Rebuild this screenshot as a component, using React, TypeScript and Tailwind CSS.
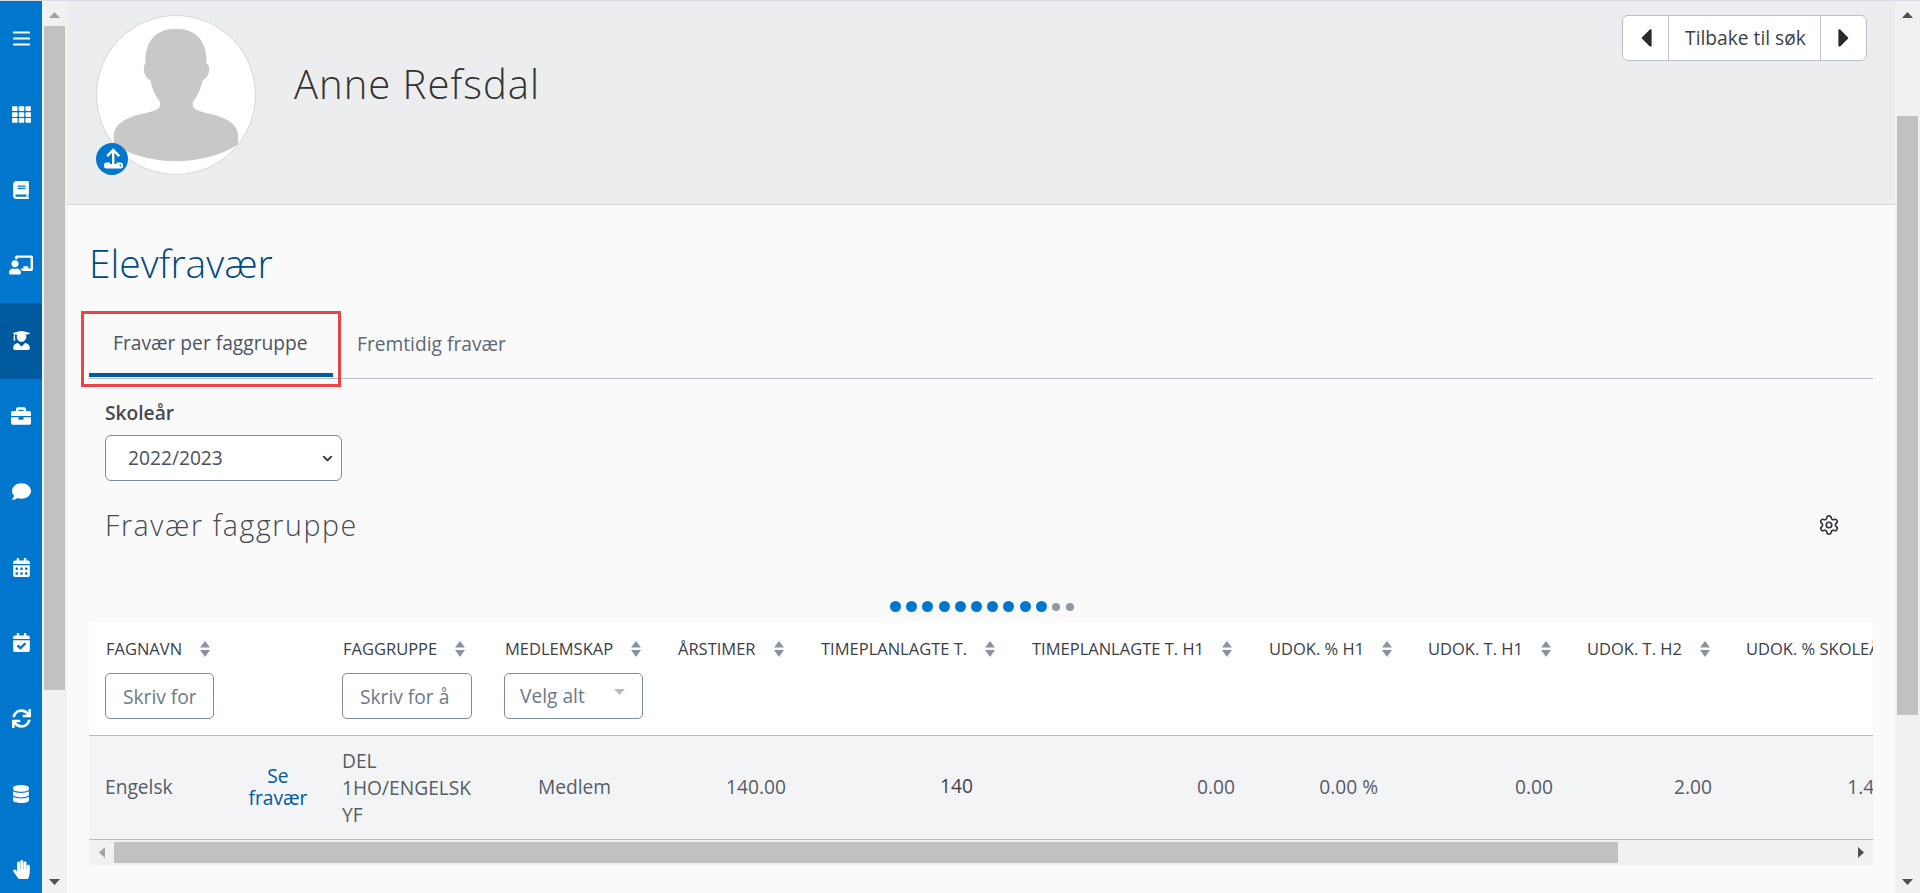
import {
  FaTh, FaBook, FaChalkboardTeacher, FaUserGraduate, FaBriefcase, FaComment,
  FaCalendarAlt, FaCalendarCheck, FaSync, FaDatabase, FaHandPaper, FaCaretLeft, FaCaretRight,
} from 'react-icons/fa';
import { ChevronDown, Settings } from 'lucide-react';

const MenuIcon = () => (
    <svg width="17" height="15" viewBox="0 0 17 15" fill="white">
        <rect y="0.5" width="17" height="2" rx="0.5" />
        <rect y="6.5" width="17" height="2" rx="0.5" />
        <rect y="12.5" width="17" height="2" rx="0.5" />
    </svg>
);

const UploadIcon = () => (
    <svg width="32" height="32" viewBox="0 0 32 32">
        <rect x="8" y="19.5" width="19" height="6" rx="2.5" fill="white" />
        <rect x="14" y="18" width="6.5" height="3" fill="#0077cc" />
        <circle cx="24.5" cy="22.5" r="1" fill="#0077cc" />
        <path d="M17.2 21 V7.5 M11.2 13.2 L17.2 7 L23.2 13.2" fill="none" stroke="white" strokeWidth="2.4" />
    </svg>
);

const navItems = [
    { Icon: null, size: 0 },
    { Icon: FaTh, size: 19 },
    { Icon: FaBook, size: 18 },
    { Icon: FaChalkboardTeacher, size: 24 },
    { Icon: FaUserGraduate, size: 19 },
    { Icon: FaBriefcase, size: 20 },
    { Icon: FaComment, size: 19 },
    { Icon: FaCalendarAlt, size: 19 },
    { Icon: FaCalendarCheck, size: 19 },
    { Icon: FaSync, size: 19 },
    { Icon: FaDatabase, size: 18 },
    { Icon: FaHandPaper, size: 19 },
];

const SortIcon = () => (
    <svg width="10" height="16" viewBox="0 0 10 16" className="shrink-0 ml-[18px]" fill="#8793a1">
        <path d="M5 0 L10 6.5 L0 6.5 Z" />
        <path d="M0 9 L10 9 L5 16 Z" />
    </svg>
);

const Arrow = ({ dir, color = '#a3a3a3' }: { dir: 'up' | 'down' | 'left' | 'right'; color?: string }) => {
    const paths = { up: 'M0 6 L5.5 0 L11 6 Z', down: 'M0 0 L11 0 L5.5 6 Z', left: 'M6 0 L6 11 L0 5.5 Z', right: 'M0 0 L6 5.5 L0 11 Z' };
    const vertical = dir === 'up' || dir === 'down';
    return (
        <svg width={vertical ? 11 : 6} height={vertical ? 6 : 11} viewBox={vertical ? '0 0 11 6' : '0 0 6 11'} fill={color}>
            <path d={paths[dir]} />
        </svg>
    );
};

const VScroll = ({ top, height, topColor }: { top: string; height: string; topColor: string }) => (
    <div className="w-[25px] shrink-0 h-full bg-[#f1f1f1] flex flex-col items-center">
        <div className={`${top} w-full flex justify-center pt-[11px]`}><Arrow dir="up" color={topColor} /></div>
        <div className={`${height} w-[21px] bg-[#c1c1c1]`} />
        <div className="flex-1 w-full flex items-end justify-center pb-[8px]"><Arrow dir="down" color="#505050" /></div>
    </div>
);

const columns = [
    { label: 'FAGNAVN', w: 'w-[141px]' },
    { label: '', w: 'w-[96px]' },
    { label: 'FAGGRUPPE', w: 'w-[162px]' },
    { label: 'MEDLEMSKAP', w: 'w-[174px]' },
    { label: 'ÅRSTIMER', w: 'w-[143px]' },
    { label: 'TIMEPLANLAGTE T.', w: 'w-[211px]' },
    { label: 'TIMEPLANLAGTE T. H1', w: 'w-[237px]' },
    { label: 'UDOK. % H1', w: 'w-[159px]' },
    { label: 'UDOK. T. H1', w: 'w-[159px]' },
    { label: 'UDOK. T. H2', w: 'w-[159px]' },
    { label: 'UDOK. % SKOLEÅR', w: 'w-[199px]' },
];

const filterInput = 'h-[46px] mt-[14px] border border-[#7f8b98] rounded-[5px] bg-white pl-[17px] pr-[17px] text-[19.2px] font-medium text-[#6c7a89] placeholder:text-[#6c7a89] outline-none';

const App = () => {
    return (
        <div className="h-[893px] w-[1920px] overflow-hidden flex border-t border-[#d8dbdf] bg-[#fafafa] text-[19.2px] font-['Open_Sans',sans-serif]">
            {/* Sidebar */}
            <nav className="w-[42px] shrink-0 h-full bg-[#0077cc] flex flex-col">
                {navItems.map(({ Icon, size }, i) => (
                    <div key={i} className={`h-[75.5px] shrink-0 flex items-center justify-center text-white ${i === 4 ? 'bg-[#005a9e]' : ''}`}>
                        {Icon ? <Icon size={size} /> : <MenuIcon />}
                    </div>
                ))}
            </nav>
            <VScroll top="h-[25px]" height="h-[664px]" topColor="#a3a3a3" />

            <main className="flex-1 min-w-0 h-full">
                {/* Header */}
                <header className="h-[204px] bg-[#ecedef] border-b border-[#d3d6da] flex pl-[29px] pr-[28px] pt-[14px]">
                    <div className="relative w-[160px] h-[160px] shrink-0">
                        <div className="w-full h-full rounded-full border border-[#d3d6da] bg-white overflow-hidden">
                            <svg viewBox="0 0 160 160" className="w-full h-full" fill="#c8c8c8">
                                <path d="M80 13 C60 13 49 25 49 46 L49 48 C47 50 47 54 48 58 C49 62 52 64 54 65 C56 75 60 82 64 87 L64 90 C64 95 54 97 46 99 C28 103 17 110 17 122 L17 130 C35 142 60 147 80 147 C100 147 125 142 143 130 L143 122 C143 110 132 103 114 99 C106 97 97 95 97 90 L97 87 C101 82 105 75 107 65 C109 64 112 62 113 58 C114 54 114 50 111 48 L111 46 C111 25 100 13 80 13 Z" />
                            </svg>
                        </div>
                        <div className="absolute left-0 bottom-0 w-[32px] h-[32px] rounded-full bg-[#0077cc]">
                            <UploadIcon />
                        </div>
                    </div>
                    <h1 className="ml-[38px] mt-[41px] h-[56px] leading-[56px] text-[40px] font-light text-[#333] tracking-[1px]">Anne Refsdal</h1>
                    <div className="ml-auto w-[245px] h-[46px] flex border border-[#b9c0c8] rounded-[6px] bg-white text-[#3b3f46]">
                        <div className="w-[46px] flex items-center justify-center border-r border-[#b9c0c8]"><FaCaretLeft size={30} color="#2b2b2b" /></div>
                        <div className="w-[152px] flex items-center justify-center border-r border-[#b9c0c8] pl-[2px]">Tilbake til søk</div>
                        <div className="flex-1 flex items-center justify-center"><FaCaretRight size={30} color="#2b2b2b" /></div>
                    </div>
                </header>

                <div className="px-[22px]">
                    <h2 className="mt-[33px] h-[50px] leading-[50px] text-[39px] font-light text-[#004a80]">Elevfravær</h2>

                    {/* Tabs */}
                    <div className="relative mt-[23px] h-[68px] border-b border-[#b4bcc5] flex">
                        <div className="h-[66px] w-[244px] pl-[24px] flex items-center border-b-[4px] border-[#005a9e] text-[#4a5560] pt-[3px] whitespace-nowrap">Fravær per faggruppe</div>
                        <div className="h-[66px] px-[24px] flex items-center text-[#5d6975] pt-[1px] whitespace-nowrap">Fremtidig fravær</div>
                        <div className="absolute left-[-8px] top-0 w-[260px] h-[76px] border-[3px] border-[#e94545]" />
                    </div>

                    <div className="px-[16px]">
                        <label className="block mt-[22px] h-[24px] leading-[24px] font-semibold text-[#44494f]">Skoleår</label>
                        <div className="relative mt-[10px] w-[237px]">
                            <select className="block w-full h-[46px] appearance-none border border-[#7f8b98] rounded-[6px] bg-white pl-[22px] pr-[30px] text-[#4a5158]" defaultValue="2022/2023">
                                <option>2022/2023</option>
                            </select>
                            <ChevronDown size={15} strokeWidth={3} className="absolute right-[7px] top-[16px] text-[#2f3338] pointer-events-none" />
                        </div>
                        <div className="mt-[24px] h-[40px] flex items-center justify-between">
                            <h3 className="text-[28.5px] font-light text-[#444b52] tracking-[1.6px]">Fravær faggruppe</h3>
                            <Settings size={22} strokeWidth={1.75} className="text-[#2f3338] mr-[17px]" />
                        </div>
                    </div>

                    {/* Pagination dots */}
                    <div className="mt-[56px] h-[11px] flex items-center ml-[801px]">
                        <div className="flex gap-[5.2px]">
                            {Array.from({ length: 10 }, (_, i) => <span key={i} className="w-[11px] h-[11px] rounded-full bg-[#0077cc]" />)}
                        </div>
                        <div className="flex gap-[6px] ml-[5px]">
                            <span className="w-[8px] h-[8px] rounded-full bg-[#8f99a3]" />
                            <span className="w-[8px] h-[8px] rounded-full bg-[#8f99a3]" />
                        </div>
                    </div>

                    {/* Table */}
                    <div className="mt-[10px] w-[1784px] overflow-hidden">
                        <table className="table-fixed w-[1840px] border-collapse">
                            <colgroup>
                                {columns.map((c, i) => <col key={i} className={c.w} />)}
                            </colgroup>
                            <thead>
                                <tr className="h-[113px] bg-white border-b border-[#b4bcc5]">
                                    {columns.map((c, i) => (
                                        <th key={i} className="align-top pt-[17px] pl-[16px] pr-0 text-left font-medium text-[16.5px] text-[#3a4047]">
                                            {c.label && (
                                                <div className={`flex items-center h-[20px] whitespace-nowrap ${i <= 3 ? 'pl-[1px]' : ''}`}>
                                                    {c.label}<SortIcon />
                                                </div>
                                            )}
                                            {i === 0 && <input placeholder="Skriv for å søke" className={`${filterInput} w-[109px]`} />}
                                            {i === 2 && <input placeholder="Skriv for å søke" className={`${filterInput} w-[130px]`} />}
                                            {i === 3 && (
                                                <div className={`${filterInput} w-[139px] !pl-[15px] flex items-center relative`}>
                                                    <span className="w-[67px] overflow-hidden whitespace-nowrap">Velg alt</span>
                                                    <svg width="11" height="6" viewBox="0 0 11 6" className="absolute right-[17px] top-[15px]" fill="#b5bcc4"><path d="M0 0 L11 0 L5.5 6 Z" /></svg>
                                                </div>
                                            )}
                                        </th>
                                    ))}
                                </tr>
                            </thead>
                            <tbody>
                                <tr className="h-[104px] bg-[#f3f4f6] border-b border-[#b4bcc5] text-[#555d65]">
                                    <td className="pl-[16px]">Engelsk</td>
                                    <td className="px-[16px] text-center leading-[22px] font-medium text-[#005a9e]">Se fravær</td>
                                    <td className="px-[16px] leading-[27px]">DEL 1HO/ENGELSK YF</td>
                                    <td className="pl-[16px] pr-[17px] text-center">Medlem</td>
                                    <td className="pr-[19px] text-right">140.00</td>
                                    <td className="pr-[43px] text-right text-[#3f454b] font-medium pb-[2px]">140</td>
                                    <td className="pr-[18px] text-right">0.00</td>
                                    <td className="pr-[34px] text-right">0.00 %</td>
                                    <td className="pr-[18px] text-right">0.00</td>
                                    <td className="pr-[18px] text-right">2.00</td>
                                    <td className="pr-[23px] text-right">1.43 %</td>
                                </tr>
                            </tbody>
                        </table>
                        {/* Horizontal scrollbar */}
                        <div className="h-[25px] bg-[#f1f1f1] flex items-center">
                            <div className="w-[25px] flex justify-center"><Arrow dir="left" color="#a3a3a3" /></div>
                            <div className="w-[1504px] h-[21px] bg-[#c1c1c1]" />
                            <div className="flex-1 flex justify-end pr-[9px]"><Arrow dir="right" color="#505050" /></div>
                        </div>
                    </div>
                </div>
            </main>

            <VScroll top="h-[115px]" height="h-[599px]" topColor="#505050" />
        </div>
    );
};

export default App;
